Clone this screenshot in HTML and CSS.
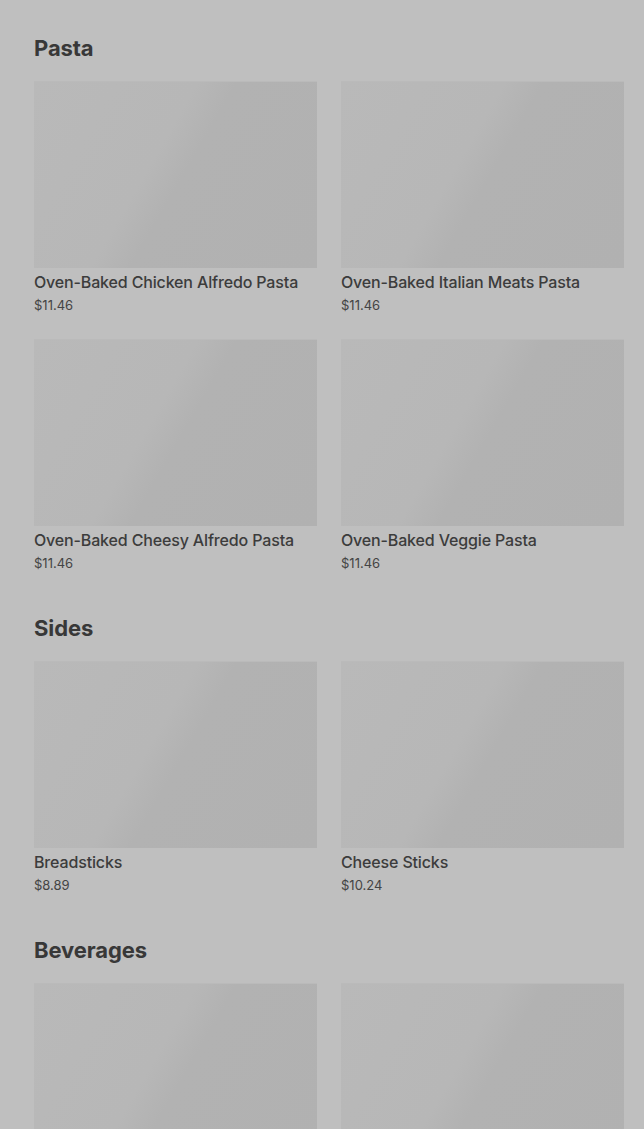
FILE: index.html
```html
<!DOCTYPE html>
<html lang="en">
<head>
<meta charset="utf-8">
<title>Menu</title>
<link rel="stylesheet" href="styles.css">
</head>
<body>
<main class="menu">
  <section class="section">
    <h2 class="section-title">Pasta</h2>
    <div class="grid">
      <div class="card"><div class="thumb"></div><div class="name">Oven-Baked Chicken Alfredo Pasta</div><div class="price">$11.46</div></div>
      <div class="card"><div class="thumb"></div><div class="name">Oven-Baked Italian Meats Pasta</div><div class="price">$11.46</div></div>
      <div class="card"><div class="thumb"></div><div class="name">Oven-Baked Cheesy Alfredo Pasta</div><div class="price">$11.46</div></div>
      <div class="card"><div class="thumb"></div><div class="name">Oven-Baked Veggie Pasta</div><div class="price">$11.46</div></div>
    </div>
  </section>
  <section class="section">
    <h2 class="section-title">Sides</h2>
    <div class="grid">
      <div class="card"><div class="thumb"></div><div class="name">Breadsticks</div><div class="price">$8.89</div></div>
      <div class="card"><div class="thumb"></div><div class="name">Cheese Sticks</div><div class="price">$10.24</div></div>
    </div>
  </section>
  <section class="section">
    <h2 class="section-title">Beverages</h2>
    <div class="grid">
      <div class="card"><div class="thumb"></div></div>
      <div class="card"><div class="thumb"></div></div>
    </div>
  </section>
</main>
</body>
</html>
```

FILE: styles.css
```css
html, body {
  margin: 0;
  padding: 0;
  background: #bfbfbf;
}
body {
  font-family: Inter, "Liberation Sans", sans-serif;
  color: #3b3b3b;
  height: 1129px;
  overflow: hidden;
}
.menu {
  padding: 34px 20px 0 34px;
}
.section {
  margin-bottom: 41px;
}
.section-title {
  margin: 0 0 19px 0;
  font-size: 22px;
  line-height: 28px;
  font-weight: 700;
  letter-spacing: -0.1px;
  color: #383838;
}
.grid {
  display: grid;
  grid-template-columns: 283px 283px;
  column-gap: 24px;
  row-gap: 24px;
}
.thumb {
  height: 187px;
  background: linear-gradient(120deg, #b9b9b9 0%, #b7b7b7 42%, #b2b2b2 52%, #b1b1b1 100%);
  border-top: 1px solid #bababa;
  box-sizing: border-box;
}
.name {
  margin-top: 2px;
  font-size: 16px;
  line-height: 24px;
  font-weight: 500;
  letter-spacing: -0.15px;
  color: #3c3c3c;
  white-space: nowrap;
}
.price {
  padding-top: 1px;
  font-size: 13px;
  line-height: 20px;
  color: #444444;
}
```
